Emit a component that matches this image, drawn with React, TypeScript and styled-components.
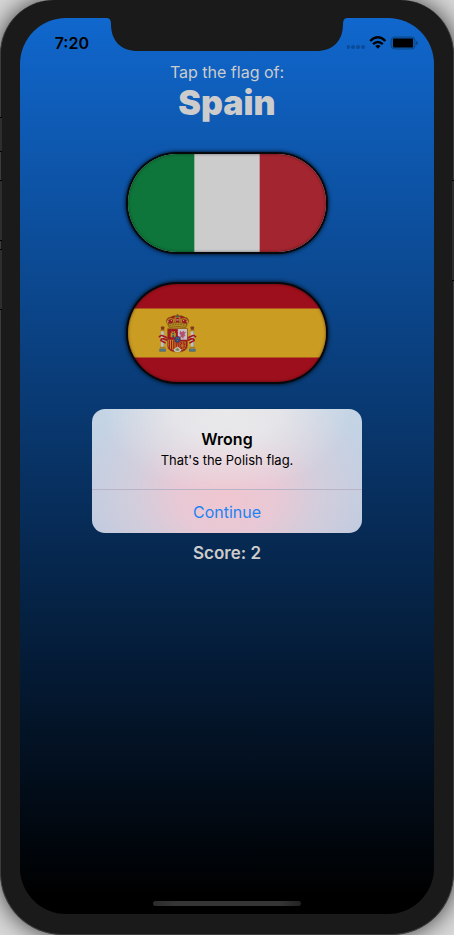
import React from "react";
import styled, { createGlobalStyle } from "styled-components";

const GlobalStyle = createGlobalStyle`
  *, *::before, *::after { box-sizing: border-box; }
  body {
    margin: 0;
    background: #d8d8d8;
    font-family: Inter, "Liberation Sans", sans-serif;
    -webkit-font-smoothing: antialiased;
  }
`;

const Phone = styled.div`
  position: relative;
  display: flex;
  min-height: 100vh;
  padding: 18px 19px 20px;
  background: #1a1a1a;
  border: 1px solid #3c3c3c;
  border-top: 0;
  border-radius: 54px 54px 62px 62px;
  box-shadow: 0 0 24px rgba(0, 0, 0, 0.75);
`;

const SideButton = styled.span<{ $side: "left" | "right"; $top: number; $length: number }>`
  position: absolute;
  ${(p) => p.$side}: -1px;
  top: ${(p) => p.$top}px;
  width: 2px;
  height: ${(p) => p.$length}px;
  background: #2e2e2e;
  border: solid #000;
  border-width: 1px 0;
`;

const Screen = styled.div`
  position: relative;
  flex: 1;
  display: flex;
  flex-direction: column;
  overflow: hidden;
  border-radius: 46px;
  background: linear-gradient(#1067cd, #000 98%);
`;

const StatusBar = styled.header`
  display: grid;
  grid-template-columns: 1fr 240px 1fr;
  height: 44px;
`;

const Time = styled.time`
  justify-self: end;
  padding: 15px 18px 0 0;
  font-size: 16px;
  line-height: 20px;
  font-weight: 600;
  color: #000;
`;

const Notch = styled.svg`
  display: block;
  width: 240px;
  height: 34px;
`;

const StatusIcons = styled.svg`
  display: block;
  width: 72px;
  height: 14px;
  margin-top: 18px;
`;

const Game = styled.main`
  flex: 1;
  display: flex;
  flex-direction: column;
  align-items: center;
  gap: 30px;
  color: #cccccc;
`;

const Prompt = styled.div`
  display: flex;
  flex-direction: column;
  align-items: center;
  height: 61px;
`;

const PromptText = styled.p`
  margin: 0;
  font-size: 16px;
  line-height: 20px;
`;

const Country = styled.h1`
  margin: 0;
  font-size: 34px;
  line-height: 41px;
  font-weight: 900;
`;

const FlagButton = styled.button`
  position: relative;
  display: block;
  width: 202px;
  height: 102px;
  margin: -1px;
  padding: 2px;
  border: 0;
  border-radius: 51px;
  background: #05090d;
  box-shadow: 0 0 4px #000;
  cursor: pointer;

  &::after {
    content: "";
    position: absolute;
    inset: 2px;
    border-radius: 49px;
    box-shadow: inset 0 0 3px rgba(0, 0, 0, 0.5);
  }
`;

const FlagArt = styled.svg`
  display: block;
  width: 100%;
  height: 100%;
  border-radius: 49px;
`;

const Score = styled.p`
  margin: 0;
  font-size: 17px;
  line-height: 20px;
  font-weight: 600;
`;

const HomeIndicator = styled.div`
  align-self: center;
  width: 148px;
  height: 5px;
  margin-bottom: 8px;
  border-radius: 3px;
  background: linear-gradient(90deg, #2b2b2b, #363636 15%, #363636 85%, #222);
`;

const AlertLayer = styled.div`
  position: absolute;
  inset: 0;
  display: flex;
  align-items: center;
  justify-content: center;
  padding: 44px 0 34px;
`;

const Alert = styled.section`
  width: 270px;
  border-radius: 13px;
  overflow: hidden;
  text-align: center;
  color: #000;
  background:
    radial-gradient(ellipse 125px 85px at 50% 0%, #e9e9eb 0%, rgba(233, 233, 235, 0.85) 40%, rgba(233, 233, 235, 0.4) 70%, rgba(233, 233, 235, 0) 100%),
    radial-gradient(ellipse 145px 120px at 50% 68%, #f0c6d0 0%, rgba(238, 200, 211, 0.85) 35%, rgba(226, 205, 216, 0.5) 65%, rgba(210, 206, 222, 0) 100%),
    linear-gradient(#c4d4e5, #c0cbdf);
`;

const AlertBody = styled.div`
  padding: 19px 16px 19px;
  border-bottom: 1px solid #b9b3c8;
`;

const AlertTitle = styled.h2`
  margin: 0;
  font-size: 16px;
  line-height: 22px;
  font-weight: 600;
`;

const AlertMessage = styled.p`
  margin: 0;
  font-size: 13px;
  line-height: 20px;
`;

const AlertAction = styled.button`
  display: block;
  width: 100%;
  height: 43px;
  padding: 0;
  border: 0;
  background: transparent;
  font: inherit;
  font-size: 16px;
  color: #1d83f2;
  cursor: pointer;
`;

function ItalianFlag() {
  return (
    <FlagArt viewBox="0 0 200 100" preserveAspectRatio="none" aria-hidden="true">
      <rect width="200" height="100" fill="#cccccc" />
      <rect width="67" height="100" fill="#0e763a" />
      <rect x="133" width="67" height="100" fill="#a3252f" />
    </FlagArt>
  );
}

function PolishFlag() {
  return (
    <FlagArt viewBox="0 0 200 100" preserveAspectRatio="none" aria-hidden="true">
      <rect width="200" height="50" fill="#cccccc" />
      <rect y="50" width="200" height="50" fill="#b01030" />
    </FlagArt>
  );
}

function Pillar() {
  return (
    <g>
      <path d="M4 3q6-5 12 0l-2 9H6z" fill="#75541b" />
      <path d="M5 5h10M6 9h8" stroke="#9e1720" strokeWidth="2" />
      <rect x="3" y="11" width="14" height="5" fill="#ad8420" />
      <rect x="5" y="16" width="10" height="48" fill="#bfc0bd" />
      <path d="M14 16v48" stroke="#858b8f" strokeWidth="2" />
      <rect x="2" y="63" width="16" height="5" fill="#a27b25" />
      <path d="M0 69h20v9H0z" fill="#315b7b" />
      <path d="M0 73h20" stroke="#9ba9a8" strokeWidth="2" />
    </g>
  );
}

function SpanishFlag() {
  return (
    <FlagArt viewBox="0 0 600 300" preserveAspectRatio="none" aria-hidden="true">
      <rect width="600" height="300" fill="#9d0f1c" />
      <rect y="75" width="600" height="150" fill="#ca9c22" />
      <g transform="translate(95 129)"><Pillar /></g>
      <g transform="translate(185 129)"><Pillar /></g>
      <path d="M94 163q6-9 14-3l14 6v7l-14-5q-8-2-8 5l14 8M206 163q-6-9-14-3l-14 6v7l14-5q8-2 8 5l-14 8" fill="none" stroke="#a11522" strokeWidth="5" />
      <path d="M120 137h60v52q0 19-30 19t-30-19z" fill="#a11520" stroke="#80571d" strokeWidth="2" />
      <path d="M151 138h28v33h-28z" fill="#c2bdbd" />
      <path d="M158 143l5 5 5-5 3 5 5-2-5 8 3 5-5 2-2 7-4-6-7 4 4-9-4-5z" fill="#b34f73" />
      <path d="M129 163v-13h3v-6h3v4h4v-4h3v6h3v13z" fill="#b49323" />
      <path d="M134 150h6v4h-6zM134 157h6v6h-6z" fill="#315675" />
      <path d="M121 171h29v34q-29-2-29-18z" fill="#c79b22" />
      <path d="M125 172v27M132 172v31M139 172v33M146 172v34" stroke="#a11520" strokeWidth="4" />
      <path d="M155 177h19v16l-8 7-11 2zM155 177l19 23M174 177l-19 23M165 177v24M155 189h19" fill="none" stroke="#b98923" strokeWidth="2" />
      <path d="M137 201l13-10 13 10q-4 8-13 8t-13-8z" fill="#c6c0af" />
      <path d="M143 202l7-7 7 7-7 3z" fill="#718a54" />
      <ellipse cx="150" cy="170" rx="9" ry="10" fill="#244f85" stroke="#a11c27" strokeWidth="2" />
      <path d="M146 166h2M152 166h2M149 173h2" stroke="#b58e2e" strokeWidth="3" />
      <path d="M124 131l-7-15q-2-12 11-14 8-7 22-4 14-3 22 4 13 2 11 14l-7 15z" fill="#a01520" stroke="#765317" strokeWidth="2" />
      <path d="M124 130q-8-15-2-21t17-1l-3 22M176 130q8-15 2-21t-17-1l3 22M143 131v-29h14v29" fill="none" stroke="#ae8221" strokeWidth="4" />
      <path d="M122 122q28-9 56 0l-3 11q-25-5-50 0z" fill="#b48822" stroke="#73521b" strokeWidth="2" />
      <path d="M127 127q23-7 46 0" fill="none" stroke="#74551f" strokeWidth="3" strokeDasharray="4 4" />
      <path d="M120 115h3M130 112h3M146 110h8M167 112h3M177 115h3" stroke="#c5bb9d" strokeWidth="3" />
      <circle cx="150" cy="99" r="4" fill="#405f55" />
      <path d="M150 92v6M147 94h6" stroke="#765317" strokeWidth="2" />
    </FlagArt>
  );
}

const flags = [
  { country: "Italy", Art: ItalianFlag },
  { country: "Spain", Art: SpanishFlag },
  { country: "Poland", Art: PolishFlag },
];

export default function App() {
  return (
    <>
      <GlobalStyle />
      <Phone>
        <SideButton $side="left" $top={117} $length={35} />
        <SideButton $side="left" $top={180} $length={61} />
        <SideButton $side="left" $top={249} $length={61} />
        <SideButton $side="right" $top={180} $length={101} />
        <Screen>
          <StatusBar>
            <Time>7:20</Time>
            <Notch viewBox="0 0 240 34" aria-hidden="true">
              <path d="M0 0Q4 0 4 6C4 23 14 33 31 33H209C226 33 236 23 236 6Q236 0 240 0V-1H0Z" fill="#1a1a1a" />
            </Notch>
            <StatusIcons viewBox="0 0 72 14" role="img" aria-label="Wi-Fi connected, battery full">
              <g fill="#0a4c98">
                <circle cx="1" cy="11" r="2" />
                <circle cx="6" cy="11" r="2" />
                <circle cx="11" cy="11" r="2" />
                <circle cx="16" cy="11" r="2" />
              </g>
              <g fill="none" stroke="#000" strokeWidth="2.4">
                <path d="M23.2 5Q31 -2.4 38.4 5" />
                <path d="M26 8.2Q31 3.6 35.8 8.2" />
              </g>
              <path d="M28.2 10.1Q31 7.8 33.6 10.1L31 12.800Z" fill="#000" />
              <rect x="44" y="1" width="24" height="12" rx="3.500" fill="#0d58b0" stroke="#0a4888" />
              <rect x="46" y="2.600" width="20" height="9" rx="1" fill="#000" />
              <path d="M69 5Q71 5 71 7T69 9Z" fill="#0a4888" />
            </StatusIcons>
          </StatusBar>
          <Game>
            <Prompt>
              <PromptText>Tap the flag of:</PromptText>
              <Country>Spain</Country>
            </Prompt>
            {flags.map(({ country, Art }) => (
              <FlagButton key={country} type="button" aria-label={`Flag of ${country}`}>
                <Art />
              </FlagButton>
            ))}
            <Score>Score: 2</Score>
          </Game>
          <HomeIndicator />
          <AlertLayer>
            <Alert role="alertdialog" aria-labelledby="alert-title" aria-describedby="alert-message">
              <AlertBody>
                <AlertTitle id="alert-title">Wrong</AlertTitle>
                <AlertMessage id="alert-message">That's the Polish flag.</AlertMessage>
              </AlertBody>
              <AlertAction type="button">Continue</AlertAction>
            </Alert>
          </AlertLayer>
        </Screen>
      </Phone>
    </>
  );
}
